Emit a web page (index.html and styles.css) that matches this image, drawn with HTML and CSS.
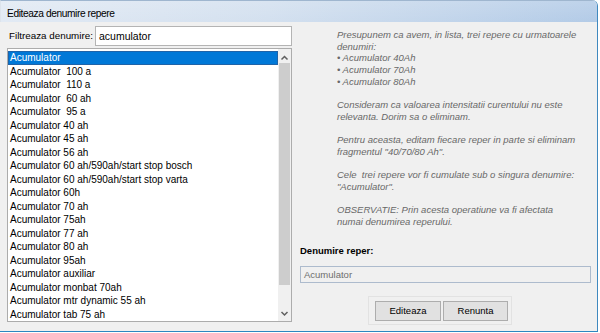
FILE: index.html
```html
<!DOCTYPE html>
<html lang="ro">
<head>
  <meta charset="UTF-8">
  <title>Editeaza denumire repere</title>
  <link rel="stylesheet" href="styles.css">
</head>
<body>
<div class="window">
  <div class="titlebar">Editeaza denumire repere</div>
  <div class="content">
    <div class="left">
      <div class="filter">
        <label>Filtreaza denumire:</label>
        <div class="input">acumulator</div>
      </div>
      <div class="listbox">
        <ul class="items">
          <li class="selected">Acumulator</li>
          <li>Acumulator  100 a</li>
          <li>Acumulator  110 a</li>
          <li>Acumulator  60 ah</li>
          <li>Acumulator  95 a</li>
          <li>Acumulator 40 ah</li>
          <li>Acumulator 45 ah</li>
          <li>Acumulator 56 ah</li>
          <li>Acumulator 60 ah/590ah/start stop bosch</li>
          <li>Acumulator 60 ah/590ah/start stop varta</li>
          <li>Acumulator 60h</li>
          <li>Acumulator 70 ah</li>
          <li>Acumulator 75ah</li>
          <li>Acumulator 77 ah</li>
          <li>Acumulator 80 ah</li>
          <li>Acumulator 95ah</li>
          <li>Acumulator auxiliar</li>
          <li>Acumulator monbat 70ah</li>
          <li>Acumulator mtr dynamic 55 ah</li>
          <li>Acumulator tab 75 ah</li>
        </ul>
        <div class="scrollbar">
          <div class="arrow up">
            <svg width="13" height="14" viewBox="0 0 13 14"><path d="M3.5 10.5 L6.5 7.5 L9.5 10.5" fill="none" stroke="#606060" stroke-width="1.5"/></svg>
          </div>
          <div class="track"><div class="thumb"></div></div>
          <div class="arrow down">
            <svg width="13" height="15" viewBox="0 0 13 15"><path d="M3.5 6 L6.5 9 L9.5 6" fill="none" stroke="#606060" stroke-width="1.5"/></svg>
          </div>
        </div>
      </div>
    </div>
    <div class="right">
      <div class="info">
        <p>Presupunem ca avem, in lista, trei repere cu urmatoarele<br>denumiri:<br>&bull; Acumulator 40Ah<br>&bull; Acumulator 70Ah<br>&bull; Acumulator 80Ah</p>
        <p>Consideram ca valoarea intensitatii curentului nu este<br>relevanta. Dorim sa o eliminam.</p>
        <p>Pentru aceasta, editam fiecare reper in parte si eliminam<br>fragmentul "40/70/80 Ah".</p>
        <p>Cele&nbsp; trei repere vor fi cumulate sub o singura denumire:<br>"Acumulator".</p>
        <p>OBSERVATIE: Prin acesta operatiune va fi afectata<br>numai denumirea reperului.</p>
      </div>
      <div class="name-label">Denumire reper:</div>
      <div class="name-field">Acumulator</div>
      <div class="buttons">
        <button class="btn btn-edit">Editeaza</button>
        <button class="btn btn-cancel">Renunta</button>
      </div>
    </div>
  </div>
</div>
</body>
</html>
```

FILE: styles.css
```css
body,div,ul,li,p{margin:0;padding:0;}
ul{list-style-type:none;}
body{background:#fff;font:10px/12px "Liberation Sans",Arial,sans-serif;color:#000;}

.window{width:597px;height:331px;border-right:1px solid #3f89bf;border-bottom:1px solid #2c87c0;border-top-right-radius:6px;overflow:hidden;background:#f0f0f0;}
.titlebar{height:22px;box-sizing:border-box;padding:3px 0 0 6px;line-height:19px;font-size:10.2px;letter-spacing:-0.4px;color:#000;border-top:1px solid #9fb6cf;border-left:1px solid #dde4ec;background:linear-gradient(to bottom,rgba(255,255,255,0.15),rgba(255,255,255,0)),linear-gradient(to right,#e2eaf4 0%,#d3e0ef 45%,#b3cbe7 100%);}

.content{display:flex;gap:8px;padding:4px 0 0 7px;}
.left{width:285px;}
.filter{display:flex;align-items:center;height:20px;}
.filter label{width:86px;padding-left:2px;font-size:9.8px;}
.input{flex:1;height:20px;box-sizing:border-box;border:1px solid #b4b4b4;background:#fff;padding-left:3px;line-height:18px;font-size:10.5px;}

.listbox{display:flex;margin-top:2px;height:274px;box-sizing:border-box;border:1px solid #acacac;background:#fff;}
.items{flex:1;padding-top:2px;overflow:hidden;}
.items li{height:13.5px;line-height:13.5px;padding-left:2px;white-space:pre;font-size:10px;}
.items li.selected{background:#0078d7;color:#fff;box-shadow:inset 0 0 0 1px #1f63a8;}

.scrollbar{width:13px;display:flex;flex-direction:column;background:#f0f0f0;}
.arrow{height:14px;}
.arrow svg{display:block;}
.arrow.down{height:15px;}
.track{flex:1;padding:0 1px;}
.thumb{height:222px;background:#cdcdcd;}

.right{width:291px;}
.info{margin-top:3px;padding-left:37px;font-size:9.5px;line-height:11.7px;font-style:italic;color:#686868;white-space:nowrap;}
.info p{margin-bottom:11.7px;}
.info p:last-child{margin-bottom:0;}
.name-label{margin-top:17px;font-weight:bold;font-size:9.5px;line-height:12px;}
.name-field{margin-top:9px;height:17px;box-sizing:border-box;border:1px solid #adbbcd;background:#f0f0f0;padding-left:3px;line-height:15px;font-size:9.5px;color:#6d6d6d;}

.buttons{display:flex;gap:2px;margin:13px 0 0 68px;width:144px;height:29px;box-sizing:border-box;padding:4px 0 0 6px;border:1px solid #e2e2e2;}
.btn{height:20px;box-sizing:border-box;border:1px solid #adadad;background:#e1e1e1;font:9.5px "Liberation Sans",Arial,sans-serif;color:#000;padding:0;}
.btn-edit{width:66px;}
.btn-cancel{width:65px;}
```
